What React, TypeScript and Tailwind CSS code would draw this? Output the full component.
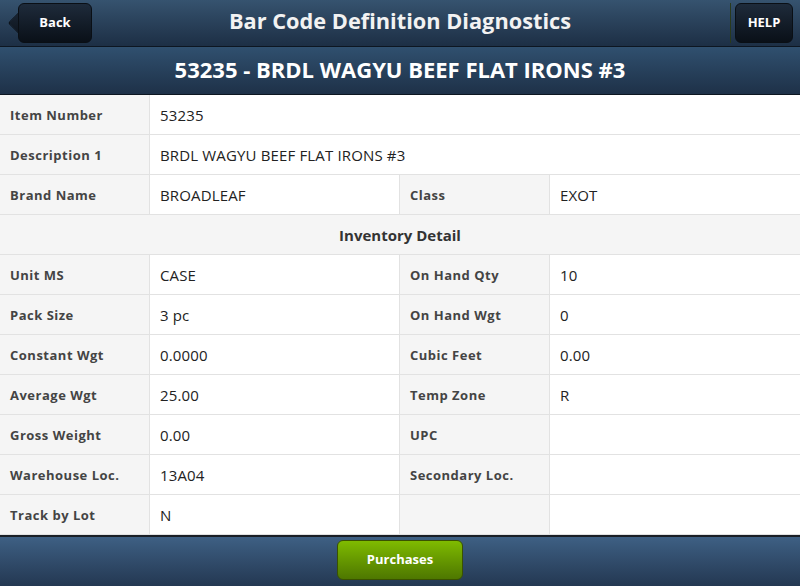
import type { ReactNode } from 'react';

// ── Data ──────────────────────────────────────────────────────────────────────

type Cell = { label: string; value: string };

const topRows: Cell[][] = [
  [{ label: 'Item Number', value: '53235' }],
  [{ label: 'Description 1', value: 'BRDL WAGYU BEEF FLAT IRONS #3' }],
  [
    { label: 'Brand Name', value: 'BROADLEAF' },
    { label: 'Class', value: 'EXOT' },
  ],
];

const detailRows: Cell[][] = [
  [
    { label: 'Unit MS', value: 'CASE' },
    { label: 'On Hand Qty', value: '10' },
  ],
  [
    { label: 'Pack Size', value: '3 pc' },
    { label: 'On Hand Wgt', value: '0' },
  ],
  [
    { label: 'Constant Wgt', value: '0.0000' },
    { label: 'Cubic Feet', value: '0.00' },
  ],
  [
    { label: 'Average Wgt', value: '25.00' },
    { label: 'Temp Zone', value: 'R' },
  ],
  [
    { label: 'Gross Weight', value: '0.00' },
    { label: 'UPC', value: '' },
  ],
  [
    { label: 'Warehouse Loc.', value: '13A04' },
    { label: 'Secondary Loc.', value: '' },
  ],
  [
    { label: 'Track by Lot', value: 'N' },
    { label: '', value: '' },
  ],
];

// ── Cells ─────────────────────────────────────────────────────────────────────

function Label({ children }: { children?: ReactNode }) {
  return (
    <div className="w-[150px] shrink-0 flex items-center pl-[10px] pt-[2px] bg-[#f5f5f5] border-r border-[#e2e2e2] text-[13px] font-bold tracking-[0.5px] text-[#444]">
      {children}
    </div>
  );
}

function Value({ children, wide }: { children?: ReactNode; wide?: boolean }) {
  return (
    <div
      className={`flex items-center pl-[10px] pt-[2px] bg-white text-[15px] tracking-[0.15px] text-[#222] ${
        wide ? 'flex-1' : 'w-[250px] shrink-0 border-r border-[#e2e2e2]'
      }`}
    >
      {children}
    </div>
  );
}

function Row({ cells }: { cells: Cell[] }) {
  return (
    <div className="flex h-[40px] border-b border-[#e2e2e2]">
      {cells.length === 1 ? (
        <>
          <Label>{cells[0].label}</Label>
          <Value wide>{cells[0].value}</Value>
        </>
      ) : (
        <>
          <Label>{cells[0].label}</Label>
          <Value>{cells[0].value}</Value>
          <Label>{cells[1].label}</Label>
          <Value wide>{cells[1].value}</Value>
        </>
      )}
    </div>
  );
}

// ── Page ──────────────────────────────────────────────────────────────────────

export default function App() {
  return (
    <div
      className="w-[800px] h-[586px] flex flex-col overflow-hidden bg-white"
      style={{ fontFamily: '"Open Sans", "Noto Sans", sans-serif' }}
    >
      {/* top bar */}
      <div className="h-[47px] shrink-0 flex items-center bg-gradient-to-b from-[#36536f] to-[#1d2f45] border-b border-[#0d1621] relative">
        <div className="ml-[8px] relative h-[40px] w-[84px]">
          <div className="absolute left-[5px] top-[7px] w-[26px] h-[26px] rotate-45 rounded-[3px] bg-gradient-to-br from-[#1d2a3a] to-[#0b1119] border-l border-b border-[#0a0f15]" />
          <div className="absolute left-[10px] top-0 right-0 bottom-0 rounded-[6px] bg-gradient-to-b from-[#1e2b3b] to-[#0a1018] border border-[#0a0f15] flex items-center justify-center text-[13px] font-bold text-white">
            Back
          </div>
        </div>
        <div className="flex-1 text-center text-[21.75px] font-bold text-[#f2f2f2] pb-[3px] pr-[22px]">
          Bar Code Definition Diagnostics
        </div>
        <div className="w-px h-[40px] bg-[#2a3a1c] mr-[4px]" />
        <div className="mr-[7px] w-[58px] h-[40px] rounded-[6px] bg-gradient-to-b from-[#1e2b3b] to-[#0a1018] border border-[#0a0f15] flex items-center justify-center text-[13px] font-bold text-white">
          HELP
        </div>
      </div>

      {/* item heading */}
      <div className="h-[48px] shrink-0 flex items-center justify-center pb-[2px] bg-gradient-to-b from-[#30506f] to-[#1e3148] border-b border-[#0d1621] text-[22px] font-bold text-white">
        53235 - BRDL WAGYU BEEF FLAT IRONS #3
      </div>

      {/* table */}
      <div className="flex-1 flex flex-col">
        {topRows.map((r, i) => (
          <Row key={i} cells={r} />
        ))}
        <div className="h-[40px] flex items-center justify-center pt-[2px] bg-[#f5f5f5] border-b border-[#e2e2e2] text-[15px] font-bold text-[#333]">
          Inventory Detail
        </div>
        {detailRows.map((r, i) => (
          <Row key={i} cells={r} />
        ))}
      </div>

      {/* footer */}
      <div className="h-[51px] shrink-0 flex items-start justify-center pt-[3px] bg-gradient-to-b from-[#3e6084] to-[#243852] border-t-2 border-[#1a1f26]">
        <div className="w-[126px] h-[40px] rounded-[6px] bg-gradient-to-b from-[#7fbb00] to-[#4e7700] border border-[#3a5200] flex items-center justify-center text-[13px] font-bold text-white">
          Purchases
        </div>
      </div>
    </div>
  );
}
